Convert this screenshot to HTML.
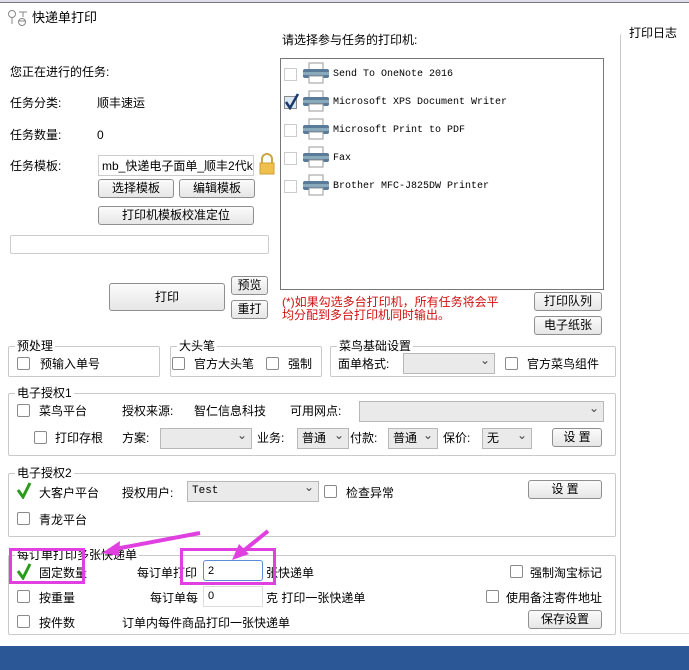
<!DOCTYPE html>
<html><head><meta charset="utf-8"><style>
*{box-sizing:border-box;margin:0;padding:0}
body{width:689px;height:670px;background:#fff;position:relative;overflow:hidden;font-family:"Liberation Sans","Noto Sans CJK SC","WenQuanYi Zen Hei",sans-serif;font-size:12px;color:#000}
.a{position:absolute;white-space:nowrap;line-height:14px}
.btn{position:absolute;border:1px solid #8f8f8f;border-radius:3px;background:linear-gradient(#fbfbfb,#e6e6e6);text-align:center;font-size:12px}
.cb{position:absolute;width:13px;height:13px;border:1px solid #8a8a8a;border-radius:2px;background:#fff}
.grp{position:absolute;border:1px solid #c9c9c9;border-radius:2px}
.grp>span{position:absolute;top:-8px;left:6px;background:#fff;padding:0 2px;line-height:14px}
.sel{position:absolute;border:1px solid #b8b8b8;background:#eaeaea;font-size:12px;padding-left:4px;line-height:18px}
.sel:after{content:"⌄";position:absolute;right:4px;top:-3px;font-size:12px;color:#444}
.mono{font-family:"Liberation Mono",monospace;font-size:10px}
.pr{position:absolute;width:28px;height:22px}
</style></head><body>
<div style="position:absolute;left:0;top:0;width:689px;height:3px;border-bottom:1px solid #777;background:#dde"></div>
<svg class="a" style="left:7px;top:9px" width="22" height="18" viewBox="0 0 22 18"><circle cx="5" cy="5" r="3.5" fill="none" stroke="#888"/><path d="M5 9v6M12 3h8M16 3v5M11 12h8" stroke="#888" fill="none"/><circle cx="15" cy="13" r="3.5" fill="none" stroke="#888"/></svg>
<div class="a" style="left:32px;top:11px;font-size:13px">快递单打印</div>

<div class="a" style="left:10px;top:65px">您正在进行的任务:</div>
<div class="a" style="left:10px;top:96px">任务分类:</div><div class="a" style="left:97px;top:96px">顺丰速运</div>
<div class="a" style="left:10px;top:128px">任务数量:</div><div class="a" style="left:97px;top:128px">0</div>
<div class="a" style="left:10px;top:159px">任务模板:</div>
<div class="a" style="left:98px;top:155px;width:156px;height:21px;border:1px solid #ccc;padding:3px 3px;overflow:hidden">mb_快递电子面单_顺丰2代k</div>
<svg class="a" style="left:258px;top:153px" width="18" height="22"><path d="M4 10V6a5 5 0 0 1 10 0v4" stroke="#caa54a" stroke-width="2" fill="none"/><rect x="2" y="10" width="14" height="11" fill="#f0c04c" stroke="#d0a030"/></svg>
<div class="btn" style="left:98px;top:179px;width:76px;height:19px;line-height:17px">选择模板</div>
<div class="btn" style="left:179px;top:179px;width:76px;height:19px;line-height:17px">编辑模板</div>
<div class="btn" style="left:98px;top:206px;width:156px;height:19px;line-height:17px">打印机模板校准定位</div>
<div class="a" style="left:10px;top:235px;width:259px;height:19px;border:1px solid #ccc;border-radius:2px"></div>
<div class="btn" style="left:109px;top:283px;width:116px;height:28px;line-height:26px">打印</div>
<div class="btn" style="left:231px;top:276px;width:37px;height:19px;line-height:17px">预览</div>
<div class="btn" style="left:231px;top:300px;width:37px;height:19px;line-height:17px">重打</div>

<div class="a" style="left:282px;top:33px">请选择参与任务的打印机:</div>
<div class="a" style="left:280px;top:58px;width:324px;height:232px;border:1px solid #777"></div>
<div class="grp" style="left:620px;top:34px;width:80px;height:600px;border-right:none;border-top:none;border-bottom:1px solid #ddd"><span style="left:6px;top:-8px">打印日志</span></div>

<div class="a" style="left:282px;top:296px;color:#d01010;line-height:13px">(*)如果勾选多台打印机，所有任务将会平<br>均分配到多台打印机同时输出。</div>
<div class="btn" style="left:534px;top:292px;width:68px;height:19px;line-height:17px">打印队列</div>
<div class="btn" style="left:534px;top:316px;width:68px;height:19px;line-height:17px">电子纸张</div>

<div class="grp" style="left:8px;top:346px;width:152px;height:31px"><span>预处理</span></div>
<div class="cb" style="left:17px;top:357px"></div><div class="a" style="left:40px;top:357px">预输入单号</div>
<div class="grp" style="left:170px;top:346px;width:152px;height:31px"><span>大头笔</span></div>
<div class="cb" style="left:172px;top:357px"></div><div class="a" style="left:194px;top:357px">官方大头笔</div>
<div class="cb" style="left:266px;top:357px"></div><div class="a" style="left:288px;top:357px">强制</div>
<div class="grp" style="left:330px;top:346px;width:286px;height:31px"><span>菜鸟基础设置</span></div>
<div class="a" style="left:338px;top:357px">面单格式:</div>
<div class="sel" style="left:403px;top:353px;width:92px;height:21px"></div>
<div class="cb" style="left:505px;top:357px"></div><div class="a" style="left:527px;top:357px">官方菜鸟组件</div>

<div class="grp" style="left:8px;top:393px;width:608px;height:63px"><span>电子授权1</span></div>
<div class="cb" style="left:17px;top:404px"></div><div class="a" style="left:39px;top:404px">菜鸟平台</div>
<div class="a" style="left:122px;top:404px">授权来源:</div><div class="a" style="left:194px;top:404px">智仁信息科技</div>
<div class="a" style="left:290px;top:404px">可用网点:</div>
<div class="sel" style="left:359px;top:401px;width:245px;height:21px"></div>
<div class="cb" style="left:34px;top:431px"></div><div class="a" style="left:55px;top:431px">打印存根</div>
<div class="a" style="left:122px;top:431px">方案:</div>
<div class="sel" style="left:160px;top:428px;width:92px;height:21px"></div>
<div class="a" style="left:257px;top:431px">业务:</div>
<div class="sel" style="left:297px;top:428px;width:52px;height:21px">普通</div>
<div class="a" style="left:350px;top:431px">付款:</div>
<div class="sel" style="left:388px;top:428px;width:50px;height:21px">普通</div>
<div class="a" style="left:443px;top:431px">保价:</div>
<div class="sel" style="left:482px;top:428px;width:50px;height:21px">无</div>
<div class="btn" style="left:552px;top:428px;width:50px;height:19px;line-height:17px">设 置</div>

<div class="grp" style="left:8px;top:473px;width:608px;height:64px"><span>电子授权2</span></div>
<svg class="a" style="left:16px;top:481px" width="16" height="18"><path d="M2 9l5 7L14 2" stroke="#2a9a1a" stroke-width="3" fill="none"/></svg>
<div class="a" style="left:39px;top:486px">大客户平台</div>
<div class="a" style="left:122px;top:486px">授权用户:</div>
<div class="sel" style="left:187px;top:481px;width:132px;height:21px;font-family:'Liberation Mono',monospace;font-size:11px">Test</div>
<div class="cb" style="left:324px;top:485px"></div><div class="a" style="left:346px;top:486px">检查异常</div>
<div class="btn" style="left:528px;top:480px;width:74px;height:19px;line-height:17px">设 置</div>
<div class="cb" style="left:17px;top:512px"></div><div class="a" style="left:39px;top:513px">青龙平台</div>

<div class="grp" style="left:8px;top:555px;width:608px;height:80px"><span>每订单打印多张快递单</span></div>
<svg class="a" style="left:16px;top:562px" width="16" height="18"><path d="M2 9l5 7L14 2" stroke="#2a9a1a" stroke-width="3" fill="none"/></svg>
<div class="a" style="left:39px;top:566px">固定数量</div>
<div class="a" style="left:137px;top:566px">每订单打印</div>
<div class="a" style="left:203px;top:560px;width:60px;height:21px;border:1px solid #5a8fd8;border-radius:3px;padding:3px 4px;font-size:11px">2</div>
<div class="a" style="left:266px;top:566px">张快递单</div>
<div class="cb" style="left:510px;top:565px"></div><div class="a" style="left:530px;top:566px">强制淘宝标记</div>
<div class="cb" style="left:17px;top:590px"></div><div class="a" style="left:39px;top:591px">按重量</div>
<div class="a" style="left:150px;top:591px">每订单每</div>
<div class="a" style="left:203px;top:586px;width:60px;height:21px;border:1px solid #ddd;padding:2px 4px;font-size:11px">0</div>
<div class="a" style="left:266px;top:591px">克 打印一张快递单</div>
<div class="cb" style="left:486px;top:590px"></div><div class="a" style="left:506px;top:591px">使用备注寄件地址</div>
<div class="cb" style="left:17px;top:615px"></div><div class="a" style="left:39px;top:616px">按件数</div>
<div class="a" style="left:122px;top:616px">订单内每件商品打印一张快递单</div>
<div class="btn" style="left:528px;top:610px;width:74px;height:19px;line-height:17px">保存设置</div>

<div class="a" style="left:9px;top:548px;width:76px;height:36px;border:3px solid #e040e0"></div>
<div class="a" style="left:180px;top:548px;width:96px;height:37px;border:3px solid #e040e0"></div>
<svg class="a" style="left:60px;top:525px" width="230" height="40"><path d="M140 8L55 24" stroke="#e040e0" stroke-width="4"/><path d="M42 28l18-12-1 15z" fill="#e040e0"/><path d="M208 6L182 27" stroke="#e040e0" stroke-width="4"/><path d="M172 35l7-16 10 10z" fill="#e040e0"/></svg>

<div style="position:absolute;left:0;top:646px;width:689px;height:24px;background:#2b5797"></div>

<div class="a" style="left:284px;top:68px;width:13px;height:13px;border:1px solid #ccc"></div>
<div class="a" style="left:284px;top:96px;width:13px;height:13px;border:1px solid #8a8a8a;background:#dbe8f5"></div>
<svg class="a" style="left:284px;top:92px" width="16" height="18"><path d="M2 10l4 6L14 2" stroke="#1a3a6a" stroke-width="2.5" fill="none"/></svg>
<div class="a" style="left:284px;top:124px;width:13px;height:13px;border:1px solid #ccc"></div>
<div class="a" style="left:284px;top:152px;width:13px;height:13px;border:1px solid #ccc"></div>
<div class="a" style="left:284px;top:180px;width:13px;height:13px;border:1px solid #ccc"></div>
<svg class="pr" style="left:302px;top:62px" viewBox="0 0 28 22"><rect x="7" y="1" width="14" height="7" fill="#fff" stroke="#999"/><rect x="1" y="7" width="26" height="9" rx="2" fill="#5a7a9a"/><rect x="1" y="10" width="26" height="3" fill="#8ab"/><rect x="7" y="14" width="14" height="7" fill="#fff" stroke="#999"/></svg>
<svg class="pr" style="left:302px;top:90px" viewBox="0 0 28 22"><rect x="7" y="1" width="14" height="7" fill="#fff" stroke="#999"/><rect x="1" y="7" width="26" height="9" rx="2" fill="#5a7a9a"/><rect x="1" y="10" width="26" height="3" fill="#8ab"/><rect x="7" y="14" width="14" height="7" fill="#fff" stroke="#999"/></svg>
<svg class="pr" style="left:302px;top:118px" viewBox="0 0 28 22"><rect x="7" y="1" width="14" height="7" fill="#fff" stroke="#999"/><rect x="1" y="7" width="26" height="9" rx="2" fill="#5a7a9a"/><rect x="1" y="10" width="26" height="3" fill="#8ab"/><rect x="7" y="14" width="14" height="7" fill="#fff" stroke="#999"/></svg>
<svg class="pr" style="left:302px;top:146px" viewBox="0 0 28 22"><rect x="7" y="1" width="14" height="7" fill="#fff" stroke="#999"/><rect x="1" y="7" width="26" height="9" rx="2" fill="#5a7a9a"/><rect x="1" y="10" width="26" height="3" fill="#8ab"/><rect x="7" y="14" width="14" height="7" fill="#fff" stroke="#999"/></svg>
<svg class="pr" style="left:302px;top:174px" viewBox="0 0 28 22"><rect x="7" y="1" width="14" height="7" fill="#fff" stroke="#999"/><rect x="1" y="7" width="26" height="9" rx="2" fill="#5a7a9a"/><rect x="1" y="10" width="26" height="3" fill="#8ab"/><rect x="7" y="14" width="14" height="7" fill="#fff" stroke="#999"/></svg>
<div class="a mono" style="left:333px;top:68px">Send To OneNote 2016</div>
<div class="a mono" style="left:333px;top:96px">Microsoft XPS Document Writer</div>
<div class="a mono" style="left:333px;top:124px">Microsoft Print to PDF</div>
<div class="a mono" style="left:333px;top:152px">Fax</div>
<div class="a mono" style="left:333px;top:180px">Brother MFC-J825DW Printer</div>
</body></html>
